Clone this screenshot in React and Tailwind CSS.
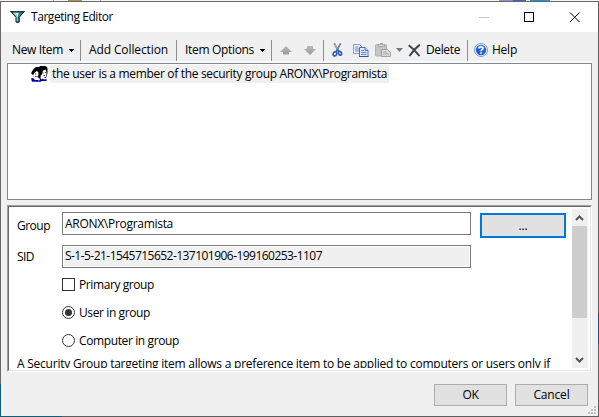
import { useLayoutEffect, useRef } from "react";

// Single-line label that spreads its letters over the width given in its classes.
function Label({ children, className = "" }) {
  const box = useRef(null);
  const inner = useRef(null);
  useLayoutEffect(() => {
    const el = inner.current;
    el.style.letterSpacing = "0px";
    const natural = el.getBoundingClientRect().width;
    const room = box.current.getBoundingClientRect().width;
    el.style.letterSpacing = `${(room - natural) / children.length}px`;
  }, [children]);
  return (
    <span ref={box} className={`block shrink-0 whitespace-nowrap ${className}`}>
      <span ref={inner} className="inline-block">{children}</span>
    </span>
  );
}

const Separator = ({ className }) => <div className={`h-[21px] w-px shrink-0 bg-[#8d8d8d] ${className}`} />;

const Caret = ({ className, color = "#000" }) => (
  <svg className={`shrink-0 ${className}`} width="5" height="3" shapeRendering="crispEdges">
    <path d="M0 0h5v1H0zM1 1h3v1H1zM2 2h1v1H2z" fill={color} />
  </svg>
);

const Funnel = () => (
  <svg width="15" height="12" viewBox="0 0 15 12" className="shrink-0">
    <path d="M1 .8h13L9.2 6.3v4.9H6V6.3z" fill="#168b91" stroke="#111" />
    <path d="M2.8 1.7h6L7.6 6v4.2h-.9V6z" fill="#d7e3e3" />
    <path d="M3 2.5h3l1 3z" fill="#a9b4b4" />
    <path d="M0 .5h15" stroke="#333" />
  </svg>
);

const Users = () => (
  <svg width="17" height="16" viewBox="0 0 17 16" className="shrink-0">
    <path d="M0 12.500L2 12l2 2h3l2-2h2l2 1.500 2.500-.5v2H11l-1.500 .8H1z" fill="#0000a8" />
    <path d="M2.500 3L5 1h3l1-1h5l2 1 .5 2v4l-1.500 5h-3l-3 2-2-3-2 1-2-1-1-2-1.500-1L.3 6.500z" fill="#000" />
    <path d="M3.800 6.500l2-1.500 1.400 1L7.600 9l-1 1.200-.6 2.800-1.700.3-1.200-1.600-.3-1.700-1-.5z" fill="#fff" />
    <path d="M12 4.500l2.500-1 1 2.500-.3 4.200-1.700 1.500-1.500 .3-1 1.400-1.500-.8.200-3.100 1.200-1z" fill="#fff" />
    <path d="M4 8h1.200M4.200 10.500h1.500M11.500 7h1.200M14 6.500h1M12.500 9.500H14" stroke="#222" strokeWidth=".9" />
    <path d="M7 13l2-.5v1.500l-1.500 .8z" fill="#e8e8ff" />
  </svg>
);

const Arrow = ({ down, className }) => (
  <svg width="12" height="9" viewBox="0 0 12 9" className={`shrink-0 ${className}`}>
    <defs>
      <linearGradient id="arrowGrey" x1="0" y1="0" x2="0" y2="1">
        <stop offset="0" stopColor="#b9b9b9" />
        <stop offset="1" stopColor="#9a9a9a" />
      </linearGradient>
    </defs>
    <path d={down ? "M3 0h6v3h3L6 9 0 3h3z" : "M6 0l6 6H9v2.5H3V6H0z"} fill="url(#arrowGrey)" />
  </svg>
);

const Scissors = () => (
  <svg width="11" height="14" viewBox="0 0 11 14" fill="none" className="ml-[8px] shrink-0">
    <path d="M2.2.3L7 9M8.7.3L4 9" stroke="#72869c" strokeWidth="1.8" />
    <path d="M2.6 1l2.6 5" stroke="#b5c5d4" strokeWidth=".7" />
    <ellipse cx="2.9" cy="10.9" rx="1.7" ry="2.1" stroke="#2854b8" strokeWidth="1.6" transform="rotate(20 2.9 10.9)" />
    <ellipse cx="8" cy="10.3" rx="1.5" ry="2" stroke="#2854b8" strokeWidth="1.6" transform="rotate(-20 8 10.3)" />
    <path d="M4 8.5l1.5-1.7L7 8.5" stroke="#3660b5" strokeWidth="1.3" />
  </svg>
);

const Copy = () => (
  <svg width="16" height="13" viewBox="0 0 16 13" className="ml-[10px] shrink-0">
    <path d="M.5.5h6l2.5 2.5v6.500H.5z" fill="#eef4ff" stroke="#7d9bd3" />
    <path d="M2 3h3.500M2 5h4M2 7h4" stroke="#5c86cf" />
    <path d="M6.500 3.500h5.500l3 3v6H6.500z" fill="#e4edfd" stroke="#4c74bd" />
    <path d="M12 3.500v3h3" fill="#bfd3f6" stroke="#4c74bd" />
    <path d="M8 6.500h3M8 8.500h5.500M8 10.500h5.500" stroke="#5c86cf" />
    <path d="M6 12.500h9.500" stroke="#2f55a0" />
  </svg>
);

const Paste = () => (
  <svg width="16" height="14" viewBox="0 0 16 14" className="ml-[6px] shrink-0">
    <rect x=".5" y="1.500" width="11" height="11.500" rx="1" fill="#c5c5c5" stroke="#b0b0b0" />
    <path d="M3 1.500h2V0h3v1.500h2V4H3z" fill="#a9a9a9" />
    <path d="M4 2.500h5" stroke="#dedede" />
    <path d="M6.500 6.500h6l3 3v4h-9z" fill="#d9d9d9" stroke="#a2a2a2" />
    <path d="M8 9h4M8 11h6" stroke="#aaa" />
  </svg>
);

const HelpIcon = () => (
  <svg width="14" height="14" viewBox="0 0 14 14" className="ml-[6px] shrink-0">
    <circle cx="7" cy="7" r="6.500" fill="#f3f7ff" stroke="#7897ce" />
    <circle cx="7" cy="7" r="5.200" fill="#2560d6" />
    <path d="M3 4.500C5 1.500 9 1.500 11 4.500c-2 1.200-5 1.500-8 0z" fill="#6b9bee" />
    <path d="M5 5.500C5 3.600 9 3.500 9 5.500 9 6.700 7 6.700 7 8.300" fill="none" stroke="#fff" strokeWidth="1.500" />
    <rect x="6.200" y="9.300" width="1.600" height="1.500" fill="#fff" />
  </svg>
);

function Chevron({ down }) {
  return (
    <svg width="9" height="6" viewBox="0 0 9 6" fill="none">
      <path d={down ? "M1 1l3.500 3.500L8 1" : "M1 5l3.500-3.500L8 5"} stroke="#555" strokeWidth="2" />
    </svg>
  );
}

function Radio({ checked }) {
  return (
    <svg width="13" height="13" className="shrink-0">
      <circle cx="6.500" cy="6.500" r="6" fill="#fff" stroke="#333" />
      {checked && <circle cx="6.500" cy="6.500" r="3.500" fill="#333" />}
    </svg>
  );
}

function TitleBar() {
  return (
    <div className="flex h-[30px] shrink-0 items-center bg-white">
      <div className="ml-[9px]"><Funnel /></div>
      <Label className="ml-[6px] w-[82px]">Targeting Editor</Label>
      <svg width="101" height="11" className="ml-auto mr-[18px]" fill="none" shapeRendering="crispEdges">
        <path d="M0 5.500h10" stroke="#c6c6c6" />
        <rect x="45.500" y=".5" width="9" height="9" stroke="#000" />
        <path d="M91 .5l9.500 9.500M100.500 .5l-9.500 9.500" stroke="#000" shapeRendering="auto" />
      </svg>
    </div>
  );
}

function Toolbar() {
  return (
    <div className="flex h-[29px] shrink-0 items-center pt-[7px]">
      <Label className="ml-[11px] w-[51px]">New Item</Label>
      <Caret className="ml-[6px]" />
      <Separator className="ml-[6px]" />
      <Label className="ml-[8px] w-[79px]">Add Collection</Label>
      <Separator className="ml-[8px]" />
      <Label className="ml-[8px] w-[69px]">Item Options</Label>
      <Caret className="ml-[6px]" />
      <Separator className="ml-[6px]" />
      <Arrow className="ml-[8px]" />
      <Arrow down className="ml-[12px]" />
      <Separator className="ml-[7px]" />
      <Scissors />
      <Copy />
      <Paste />
      <svg width="7" height="4" className="ml-[5px] shrink-0"><path d="M0 0h7L3.500 4z" fill="#777" /></svg>
      <svg width="13" height="13" viewBox="0 0 13 13" className="ml-[5px] shrink-0" fill="none">
        <path d="M.7 1.200C4 3.500 8 7.500 11.500 12M11.800.7C8 3.500 4.500 7.500 1.500 12" stroke="#3d4045" strokeWidth="2" />
      </svg>
      <Label className="ml-[5px] w-[34px]">Delete</Label>
      <Separator className="ml-[7px]" />
      <HelpIcon />
      <Label className="ml-[4px] w-[25px]">Help</Label>
    </div>
  );
}

function Panel() {
  return (
    <div className="mx-[6px] mt-[5px] h-[167px] shrink-0 border border-b-white border-l-[#a0a0a0] border-r-white border-t-[#a0a0a0]">
      <div className="flex h-full border border-b-[#e3e3e3] border-l-[#696969] border-r-[#e3e3e3] border-t-[#696969] bg-white">
        <div className="mb-[2px] flex w-[563px] flex-col overflow-hidden pl-[8px] pt-[5px]">
          <div className="flex h-[25px] shrink-0">
            <Label className="w-[33px] pt-[5px]">Group</Label>
            <div className="ml-[12px] h-[23px] w-[409px] border border-[#7a7a7a] pl-[2px] pt-[2px]">
              <Label className="w-[108px]">ARONX\Programista</Label>
            </div>
            <div className="ml-[9px] mt-px flex h-[25px] w-[86px] shrink-0 justify-center border-2 border-[#0078d7] bg-[#e1e1e1] pt-[2px]">
              <Label className="w-[9px]">...</Label>
            </div>
          </div>
          <div className="mt-[8px] flex h-[23px] shrink-0">
            <Label className="w-[17px] pt-[3px]">SID</Label>
            <div className="ml-[28px] h-[23px] w-[409px] border border-[#7a7a7a] p-px">
              <div className="h-full bg-[#f0f0f0] pl-px">
                <Label className="w-[257px]">S-1-5-21-1545715652-137101906-199160253-1107</Label>
              </div>
            </div>
          </div>
          <div className="ml-[45px] mt-[7px] flex h-[19px] shrink-0 items-center">
            <div className="size-[13px] border border-[#333] bg-white" />
            <Label className="ml-[4px] w-[75px]">Primary group</Label>
          </div>
          <div className="ml-[45px] mt-[9px] flex h-[19px] shrink-0 items-center">
            <Radio checked />
            <Label className="ml-[4px] w-[71px]">User in group</Label>
          </div>
          <div className="ml-[45px] mt-[9px] flex h-[19px] shrink-0 items-center">
            <Radio />
            <Label className="ml-[4px] w-[100px]">Computer in group</Label>
          </div>
          <Label className="mt-[5px] w-[533px]">
            A Security Group targeting item allows a preference item to be applied to computers or users only if
          </Label>
        </div>
        <div className="mb-[2px] mt-[2px] flex w-[15px] shrink-0 flex-col bg-[#f0f0f0]">
          <div className="flex h-[17px] items-center justify-center"><Chevron /></div>
          <div className="h-[92px] bg-[#cdcdcd]" />
          <div className="mt-auto flex h-[17px] items-center justify-center"><Chevron down /></div>
        </div>
        <div className="my-[2px] w-px bg-[#f0f0f0]" />
      </div>
    </div>
  );
}

const gripDots = [[6, 0], [3, 3], [6, 3], [0, 6], [3, 6], [6, 6]];

function Footer() {
  return (
    <div className="flex grow items-start justify-end pt-[12px]">
      <button className="flex h-[22px] w-[73px] justify-center border border-[#adadad] bg-[#e1e1e1] pt-px">
        <Label className="w-[16px]">OK</Label>
      </button>
      <button className="ml-[8px] flex h-[22px] w-[73px] justify-center border border-[#adadad] bg-[#e1e1e1] pt-px">
        <Label className="w-[36px]">Cancel</Label>
      </button>
      <svg width="8" height="8" className="mb-[2px] mr-[2px] self-end" shapeRendering="crispEdges">
        {gripDots.map(([x, y]) => (
          <rect key={`${x}-${y}`} x={x} y={y} width="2" height="2" fill="#bfbfbf" />
        ))}
      </svg>
    </div>
  );
}

export default function App() {
  return (
    <div className="flex h-[417px] w-[599px] flex-col overflow-hidden bg-[#686868] font-['Open_Sans','Noto_Sans',sans-serif] text-[12px] leading-[18px] text-black">
      <div className="flex h-px shrink-0 bg-[#f5f5f5]">
        <div className="ml-[53px] w-px bg-[#aaa]" />
        <div className="ml-[14px] w-[14px] bg-[#a99458]" />
        <div className="ml-[18px] w-px bg-[#aaa]" />
        <div className="ml-[398px] w-[14px] bg-[#8c91d0]" />
        <div className="w-[13px] bg-[#3c62c8]" />
        <div className="ml-[4px] w-[20px] bg-[#1597d5]" />
      </div>
      <div className="h-px shrink-0 bg-[#686868]" />
      <div className="flex h-[414px] shrink-0">
        <div className="flex w-px shrink-0 flex-col justify-end bg-[#686868]">
          <div className="h-[32px] bg-[#155b73]" />
        </div>
        <div className="flex w-[597px] flex-col bg-[#f0f0f0]">
          <TitleBar />
          <Toolbar />
          <div className="mx-[6px] h-[2px] shrink-0 bg-[#fafafa]" />
          <div className="mx-[6px] h-[137px] shrink-0 border border-[#828790] bg-white pt-px">
            <div className="flex h-[18px] items-center pl-[23px]">
              <Users />
              <div className="ml-[2px] flex h-[18px] w-[339px] items-center bg-[#f0f0f0] pl-[2px]">
                <Label className="w-[335px]">the user is a member of the security group ARONX\Programista</Label>
              </div>
            </div>
          </div>
          <Panel />
          <Footer />
        </div>
        <div className="w-px bg-[#5d5d5d]">
          <div className="mt-[312px] h-[30px] bg-[#304a80]" />
        </div>
      </div>
      <div className="flex h-px shrink-0 bg-[#5d5d5d]"><div className="w-[62px] bg-[#155b73]" /></div>
    </div>
  );
}
